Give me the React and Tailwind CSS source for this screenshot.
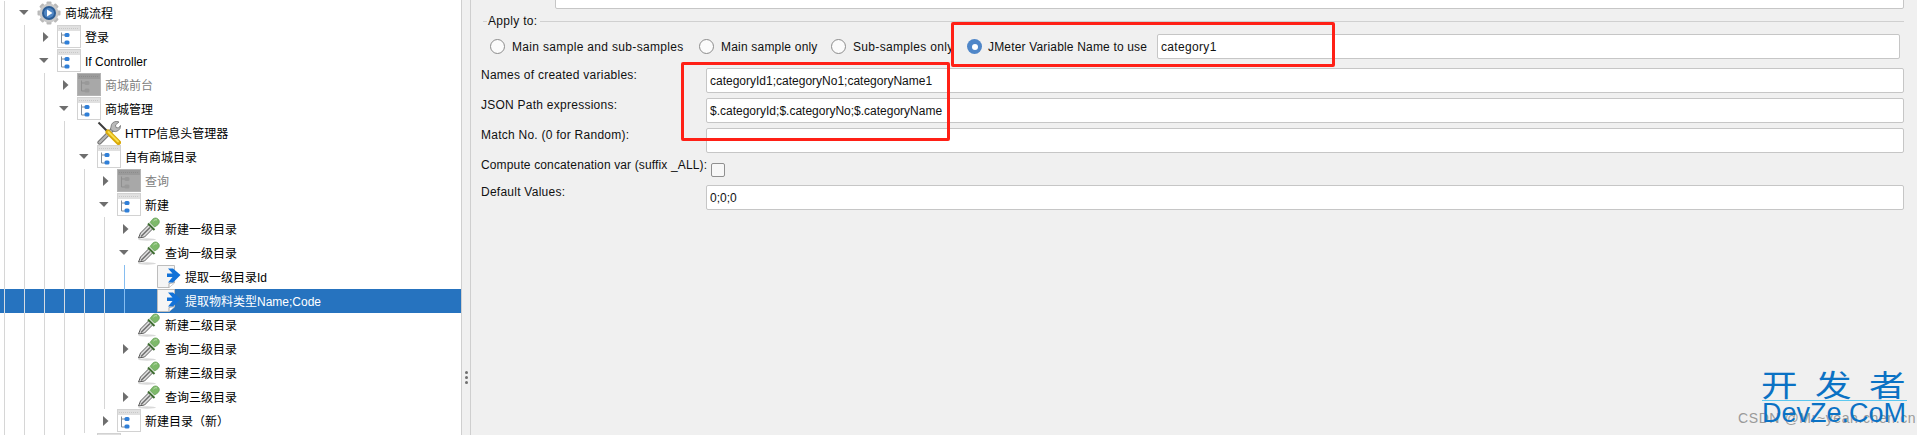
import React from "react";

const font = { fontFamily: '"Liberation Sans", "Noto Sans CJK SC", sans-serif' };

function GroupIcon({ off }) {
  const border = off ? "#b4b4b4" : "#d2d2d2";
  const body = off ? "#a8a8a8" : "#ffffff";
  const bar = off ? "#9a9a9a" : "#e0e0e0";
  const node = off ? "#999999" : "#2f7fd8";
  const tree = off ? "#8f8f8f" : "#7f8a96";
  return (
    <svg width="24" height="24" viewBox="0 0 24 24" className="shrink-0">
      <rect x="0.5" y="0.5" width="23" height="22" fill={body} stroke={border} />
      <rect x="1" y="1" width="22" height="5" fill={bar} />
      <path d="M2 3.5h20" stroke={off ? "#8c8c8c" : "#c8c8c8"} strokeDasharray="1 1" />
      <path d="M4.5 7.5v10.5h3.5M4.5 10h3.5" fill="none" stroke={tree} strokeWidth="1" />
      <rect x="7.5" y="8" width="5" height="4" rx="1.5" fill={node} />
      <rect x="7.5" y="15.5" width="5" height="4" rx="1.5" fill={node} />
    </svg>
  );
}

function GearIcon() {
  const teeth = [0, 45, 90, 135, 180, 225, 270, 315];
  return (
    <svg width="24" height="24" viewBox="0 0 24 24" className="shrink-0">
      {teeth.map((a) => (
        <rect key={a} x="9.5" y="0.5" width="5" height="5" rx="1" fill="#b9b9b9" transform={`rotate(${a} 12 12)`} />
      ))}
      <circle cx="12" cy="12" r="9.5" fill="#c9c9c9" />
      <circle cx="12" cy="12" r="7" fill="#2b5c94" />
      <circle cx="12" cy="12" r="5" fill="#4f86c4" />
      <path d="M10 8.5l5.5 3.5-5.5 3.5z" fill="#ffffff" />
    </svg>
  );
}

function ToolsIcon() {
  return (
    <svg width="24" height="24" viewBox="0 0 24 24" className="shrink-0">
      <path d="M2.5 21.5L15 9" stroke="#6f6f6f" strokeWidth="4.2" strokeLinecap="round" />
      <path d="M2.5 21.5L15 9" stroke="#b5b5b5" strokeWidth="2.4" strokeLinecap="round" />
      <path d="M14.5 3.5a5.5 5.5 0 0 1 7.5-2.5l-3.5 3 .5 2.5 2.5.5 2-2.5a5.5 5.5 0 0 1-8 5.5l-2-2z" fill="#b9b9b9" stroke="#666666" strokeWidth="0.7" />
      <path d="M1.5 1.5l11 11" stroke="#3c3c3c" strokeWidth="2" />
      <path d="M11 11l10.5 10.5" stroke="#d9a908" strokeWidth="5" strokeLinecap="round" />
      <path d="M11.5 11l9.5 9.5" stroke="#f9de4a" strokeWidth="2" strokeLinecap="round" />
    </svg>
  );
}

function PipetteIcon() {
  return (
    <svg width="24" height="24" viewBox="0 0 24 24" className="shrink-0">
      <ellipse cx="10" cy="22.5" rx="9" ry="1.2" fill="#d9d9d9" />
      <path d="M1.5 21l2-5L12 7.5l4 4L7.5 20z" fill="#dcdcdc" stroke="#5b5b5b" strokeWidth="1" />
      <path d="M4 19.5L13 10.5" stroke="#6e6e6e" strokeWidth="1.4" />
      <path d="M11 6.5l6.5 6.5" stroke="#3f6d32" strokeWidth="2" />
      <path d="M14.5 3.5c2-2.8 4.5-3.2 6.5-1.5s1.8 4.5-1 6.5l-2.5 1.5-4.5-4.5z" fill="#7db96a" stroke="#5f9a50" strokeWidth="0.7" />
      <path d="M16.5 4c1.2-1.3 2.5-1.6 3.5-1" stroke="#c4e4b8" strokeWidth="1" fill="none" />
    </svg>
  );
}

function ExtractIcon() {
  return (
    <svg width="24" height="24" viewBox="0 0 24 24" className="shrink-0">
      <path d="M0.5 0.5H17.5V18L12 22.5H0.5Z" fill="#f5f5f5" stroke="#bdbdbd" />
      <path d="M12 22.5V18.5L17.5 17.5" fill="#ffffff" stroke="#a9a9a9" />
      <path d="M11 3.5H16L23.5 10 16 17.5H11L15.5 12H10V8.5H15.5Z" fill="#1272d8" />
    </svg>
  );
}

function Arrow({ type }) {
  if (type === "r")
    return (
      <svg width="9" height="12" viewBox="0 0 9 12" className="shrink-0">
        <path d="M2 1l5.5 5L2 11z" fill="#6e6e6e" />
      </svg>
    );
  if (type === "d")
    return (
      <svg width="9" height="12" viewBox="0 0 9 12" className="shrink-0 overflow-visible">
        <path d="M-2 3h9.5L3 8z" fill="#6e6e6e" />
      </svg>
    );
  return <span className="w-[9px] shrink-0" />;
}

const rows = [
  { d: 0, a: "d", i: "gear", t: "商城流程" },
  { d: 1, a: "r", i: "group", t: "登录" },
  { d: 1, a: "d", i: "group", t: "If Controller" },
  { d: 2, a: "r", i: "off", t: "商城前台", off: true },
  { d: 2, a: "d", i: "group", t: "商城管理" },
  { d: 3, i: "tools", t: "HTTP信息头管理器" },
  { d: 3, a: "d", i: "group", t: "自有商城目录" },
  { d: 4, a: "r", i: "off", t: "查询", off: true },
  { d: 4, a: "d", i: "group", t: "新建" },
  { d: 5, a: "r", i: "pipette", t: "新建一级目录" },
  { d: 5, a: "d", i: "pipette", t: "查询一级目录" },
  { d: 6, i: "extract", t: "提取一级目录Id" },
  { d: 6, i: "extract", t: "提取物料类型Name;Code", sel: true },
  { d: 5, i: "pipette", t: "新建二级目录" },
  { d: 5, a: "r", i: "pipette", t: "查询二级目录" },
  { d: 5, i: "pipette", t: "新建三级目录" },
  { d: 5, a: "r", i: "pipette", t: "查询三级目录" },
  { d: 4, a: "r", i: "group", t: "新建目录（新）" },
  { d: 3, a: "r", i: "group", t: "" },
];

function RowIcon({ i }) {
  if (i === "gear") return <GearIcon />;
  if (i === "tools") return <ToolsIcon />;
  if (i === "pipette") return <PipetteIcon />;
  if (i === "extract") return <ExtractIcon />;
  return <GroupIcon off={i === "off"} />;
}

function TreeRow({ r }) {
  const cells = Array.from({ length: r.d + 1 }, (_, k) => k);
  return (
    <div className={`flex h-[24px] items-center pl-[4px] text-[12px] ${r.sel ? "bg-[#2673bf] text-white" : r.off ? "text-[#808080]" : "text-black"}`}>
      {cells.map((k) => {
        const last = k === r.d;
        const blue = r.d === 6 && last;
        return (
          <span
            key={k}
            className={`h-full shrink-0 border-l ${last ? "w-[17px]" : "w-[20px]"} ${blue ? "border-[#86bdf0]" : r.sel ? "border-[#d5dbe2]" : "border-[#d6d6d6]"}`}
          />
        );
      })}
      <Arrow type={r.a} />
      <span className="w-[7px] shrink-0" />
      <RowIcon i={r.i} />
      <span className="ml-[4px] whitespace-nowrap pt-[1px] leading-[24px]">{r.t}</span>
    </div>
  );
}

function Radio({ on }) {
  if (on)
    return (
      <span className="flex h-[15px] w-[15px] shrink-0 items-center justify-center rounded-full bg-[#4f86c8]">
        <span className="h-[6px] w-[6px] rounded-full bg-white" />
      </span>
    );
  return <span className="h-[15px] w-[15px] shrink-0 rounded-full border border-[#8c8c8c] bg-[#fbfbfb]" />;
}

function Field({ value, className = "" }) {
  return (
    <div className={`flex h-[25px] items-center rounded-[2px] border border-[#c6c6c6] bg-white pl-[3px] text-[12px] text-[#111] ${className}`}>
      {value}
    </div>
  );
}

function LabelRow({ label, value }) {
  return (
    <div className="flex">
      <div className="w-[225px] shrink-0 whitespace-nowrap text-[12px] leading-[15px] tracking-[0.25px] text-[#111]">{label}</div>
      <Field value={value} className="flex-1" />
    </div>
  );
}

export default function App() {
  return (
    <div className="relative flex h-[435px] w-[1917px] overflow-hidden bg-[#f0f0f0]" style={font}>
      <div className="w-[461px] shrink-0 overflow-hidden bg-white pt-[1px]">
        {rows.map((r, n) => (
          <TreeRow key={n} r={r} />
        ))}
      </div>

      <div className="flex w-[10px] shrink-0 flex-col items-center gap-[2px] border-x border-[#cfcfcf] pt-[371px]">
        <span className="h-[3px] w-[3px] rounded-full bg-[#6f6f6f]" />
        <span className="h-[3px] w-[3px] rounded-full bg-[#6f6f6f]" />
        <span className="h-[3px] w-[3px] rounded-full bg-[#6f6f6f]" />
      </div>

      <div className="flex min-w-0 flex-1 flex-col pl-[10px] pr-[13px]">
        <div className="-mt-[16px] flex">
          <div className="w-[74px] shrink-0 pl-[1px] pt-[5px] text-[12px] leading-[15px] tracking-[0.3px] text-[#111]">Comments:</div>
          <Field value="" className="flex-1" />
        </div>

        <div className="ml-[2px] mt-[4px] flex h-[16px] items-center text-[12px] tracking-[0.3px] text-[#111]">
          <span className="h-px w-[4px] bg-[#d0d0d0]" />
          <span className="px-[1px]">Apply to:</span>
          <span className="ml-[2px] h-px flex-1 bg-[#d0d0d0]" />
        </div>

        <div className="ml-[9px] mt-[5px] flex h-[25px] items-center whitespace-nowrap text-[12px] tracking-[0.33px] text-[#111]">
          <Radio />
          <span className="ml-[7px] w-[187px] shrink-0">Main sample and sub-samples</span>
          <Radio />
          <span className="ml-[7px] w-[110px] shrink-0 tracking-[0.2px]">Main sample only</span>
          <Radio />
          <span className="ml-[7px] w-[114px] shrink-0">Sub-samples only</span>
          <Radio on />
          <span className="ml-[6px] w-[169px] shrink-0 tracking-[0.17px]">JMeter Variable Name to use</span>
          <Field value="category1" className="mr-[4px] flex-1" />
        </div>

        <div className="mt-[9px] flex flex-col gap-[5px]">
          <LabelRow label="Names of created variables:" value="categoryId1;categoryNo1;categoryName1" />
          <LabelRow label="JSON Path expressions:" value="$.categoryId;$.categoryNo;$.categoryName" />
          <LabelRow label="Match No. (0 for Random):" value="" />
          <div className="flex h-[22px]">
            <div className="w-[225px] shrink-0 whitespace-nowrap text-[12px] leading-[15px] tracking-[0.14px] text-[#111]">Compute concatenation var (suffix _ALL):</div>
            <span className="ml-[5px] mt-[5px] h-[14px] w-[14px] rounded-[2px] border border-[#8f8f8f] bg-[#f7f7f7]" />
          </div>
          <LabelRow label="Default Values:" value="0;0;0" />
        </div>
      </div>

      {/* annotation boxes drawn over the screenshot */}
      <div className="absolute left-[951px] top-[22px] h-[45px] w-[384px] rounded-[2px] border-[3px] border-[#ff2016]" />
      <div className="absolute left-[681px] top-[62px] h-[79px] w-[269px] rounded-[2px] border-[3px] border-[#ff2016]" />

      {/* watermarks */}
      <div className="absolute left-[1738px] top-[408px] whitespace-nowrap text-[14px] tracking-[0.6px] text-[#9a9a9a]">CSDN @Mr~yeah.chen.cn</div>
      <div className="absolute left-[1761px] top-[365px] w-[146px] whitespace-nowrap text-[30px] leading-[36px] text-[#0b72c4]" style={{ fontFamily: '"Noto Sans CJK SC", sans-serif' }}>
        <span className="inline-block w-[54px] origin-left scale-x-[1.22]">开</span>
        <span className="inline-block w-[54px] origin-left scale-x-[1.22]">发</span>
        <span className="inline-block origin-left scale-x-[1.22]">者</span>
      </div>
      <div className="absolute left-[1762px] top-[400px] h-px w-[145px] bg-[#5cc8f0]" />
      <div className="absolute left-[1762px] top-[398px] whitespace-nowrap text-[27px] leading-[31px] text-[#0b72c4]">DevZe.CoM</div>
    </div>
  );
}
